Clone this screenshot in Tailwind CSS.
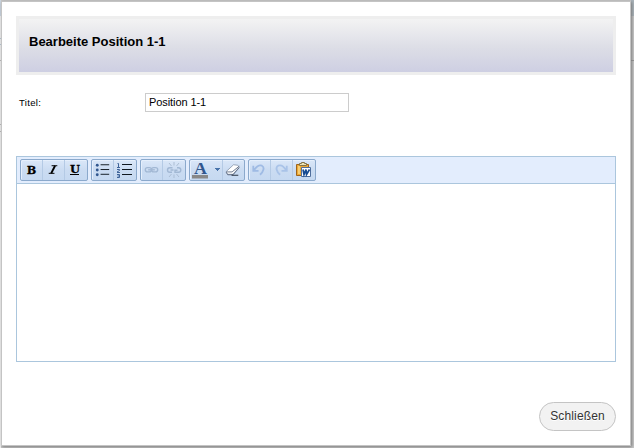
<!DOCTYPE html>
<html lang="de">
<head>
<meta charset="utf-8">
<title>Bearbeite Position 1-1</title>
<script src="https://cdn.jsdelivr.net/npm/@tailwindcss/browser@4"></script>
</head>
<body class="h-[448px] w-[634px] overflow-hidden bg-[#d0d0d0] font-['Liberation_Sans',Arial,sans-serif] text-black">
<div class="relative h-[448px] w-[634px] overflow-hidden bg-[#c9c9c9]">
  <!-- page behind the dialog -->
  <div class="absolute left-0 top-0 h-[448px] w-[1px] bg-[#f3f3f3]"></div>
  <div class="absolute left-0 top-0 h-4 w-[1px] bg-[#ccd7e2]"></div>
  <div class="absolute left-0 top-[38px] h-[7px] w-[1px] border-y border-[#b8c8d6]"></div>
  <div class="absolute left-0 top-[60px] h-px w-px bg-[#bbb]"></div>
  <div class="absolute left-0 top-[124px] h-[8px] w-[1px] border-y border-[#bbb]"></div>
  <div class="absolute right-0 top-0 h-4 w-[3px] bg-[#a9b3ba]"></div>
  <div class="absolute right-0 top-[60px] h-px w-[3px] bg-[#969696]"></div>

  <main class="absolute left-px top-px flex h-[445px] w-[630px] flex-col border border-[#c4c4c4] bg-white px-[14px] pt-[14px] shadow-[1px_1px_3px_#777]">
    <header class="flex h-[59px] w-[600px] shrink-0 items-center border-[3px] border-[#eeeeee] bg-linear-to-b from-[#f3f3f3] from-5% via-[#dcdde6] via-55% to-[#cccde2] bg-origin-border pl-[10px] pb-[8px]">
      <h1 class="text-[13px] font-bold leading-[15px]">Bearbeite Position 1-1</h1>
    </header>
    <div class="mt-[18px] flex h-[19px] shrink-0 items-center pl-[3px]">
      <label for="titel" class="w-[126px] text-[9.6px] leading-[12px] tracking-[0.3px]">Titel:</label>
      <input id="titel" value="Position 1-1" class="h-[19px] w-[204px] border border-[#cccccc] bg-white px-[3px] pb-px text-[11px] leading-[15px] tracking-[-0.08px] outline-none">
    </div>

    <section class="mt-[44px] flex h-[206px] w-[600px] shrink-0 flex-col border border-[#abc6dd]">
      <div class="flex h-[27px] shrink-0 gap-[3px] border-b border-[#abc6dd] bg-[#e3edfd] pl-[3px] pt-[2px]">
        <div class="flex h-[22px] w-[68px] divide-x divide-[#b4cae5] rounded-[2px] border border-[#8ba9cc] bg-linear-to-b from-[#dae7f8] via-[#cbdcf2] to-[#c6d9f1] shadow-[inset_1px_1px_0_#e5effc]">
          <svg width="22" height="20" viewBox="0 0 22 20"><text x="6" y="14" font-family="DejaVu Serif" font-size="12.5" font-weight="bold" textLength="10" lengthAdjust="spacingAndGlyphs" stroke="#000" stroke-width=".3">B</text></svg>
          <svg width="22" height="20" viewBox="0 0 22 20"><path d="M9 5.500h6M6 13.500h6" stroke="#000" fill="none"/><path d="M12.600 5.500l-4 8" stroke="#000" stroke-width="2"/></svg>
          <svg width="22" height="20" viewBox="0 0 22 20"><text x="5" y="13" font-family="DejaVu Serif" font-size="11" font-weight="bold" textLength="10" lengthAdjust="spacingAndGlyphs" stroke="#000" stroke-width=".3">U</text><path d="M5 14.500h9" stroke="#000"/></svg>
        </div>
        <div class="flex h-[22px] w-[46px] divide-x divide-[#b4cae5] rounded-[2px] border border-[#8ba9cc] bg-linear-to-b from-[#dae7f8] via-[#cbdcf2] to-[#c6d9f1] shadow-[inset_1px_1px_0_#e5effc]">
          <svg width="22" height="20" viewBox="0 0 22 20"><g fill="#31578f"><circle cx="5.500" cy="5" r="1.500"/><circle cx="5.500" cy="10" r="1.500"/><circle cx="5.500" cy="15" r="1.500"/></g><path d="M9 4.500h9M9 9.500h9M9 14.500h9" stroke="#101820"/></svg>
          <svg width="22" height="20" viewBox="0 0 22 20"><g fill="none" stroke="#3e6399"><path d="M3.500 3.500h1V7M3 7.500h3M3 9.500h2.500v1L3 12M3 12.500h3M3 14.500h2.500v3H3M3.500 16h2"/></g><path d="M8 4.500h10M8 9.500h10M8 14.500h10" stroke="#101820"/></svg>
        </div>
        <div class="flex h-[22px] w-[46px] divide-x divide-[#b4cae5] rounded-[2px] border border-[#8ba9cc] bg-linear-to-b from-[#dae7f8] via-[#cbdcf2] to-[#c6d9f1] shadow-[inset_1px_1px_0_#e5effc]">
          <svg width="22" height="20" viewBox="0 0 22 20"><g fill="none" stroke="#a2b8d4" stroke-width="1.400"><rect x="4.500" y="7.500" width="6.500" height="4.500" rx="2.250"/><rect x="11" y="7.500" width="6.500" height="4.500" rx="2.250"/><path d="M7.500 9.800h7"/></g></svg>
          <svg width="22" height="20" viewBox="0 0 22 20"><g fill="none" stroke="#a2b8d4" stroke-width="1.400"><path d="M9.500 7.700H6.800a2.200 2.200 0 0 0 0 4.600H9M7.500 10h3M14 7.700h1.500a2.200 2.200 0 0 1 0 4.600H12v-2h2.500"/></g><path d="M11 2v3.500M6 3l2.500 3M16 3l-2.500 3M11 14.500V18M6 17l2.500-3M16 17l-2.500-3" stroke="#a8bad0" stroke-width=".9"/></svg>
        </div>
        <div class="flex h-[22px] w-[56px] rounded-[2px] border border-[#8ba9cc] bg-linear-to-b from-[#dae7f8] via-[#cbdcf2] to-[#c6d9f1] shadow-[inset_1px_1px_0_#e5effc]">
          <svg width="22" height="20" viewBox="0 0 22 20"><path d="M2 15h16v3.500H2z" fill="#888"/><text x="4" y="13.500" font-family="Liberation Serif" font-size="16" font-weight="bold" fill="#31578f" textLength="13" lengthAdjust="spacingAndGlyphs">A</text></svg>
          <svg width="10" height="20" viewBox="0 0 10 20"><path d="M3 8h5v1H7v1H6v1H5v-1H4V9H3z" fill="#4873aa"/></svg>
          <svg class="border-l border-[#b4cae5]" width="22" height="20" viewBox="0 0 22 20"><path d="M3.500 11.500L11 4.500l4.500.5 1.500 2-6.500 7.500H5L3.500 13z" fill="#fff" stroke="#8290a5" stroke-width=".8"/><path d="M3.500 12h6L17 6M3.500 12.500L5 15h5.500L17 7.500" fill="none" stroke="#56647c" stroke-width=".9"/><path d="M9 15.500h7" stroke="#222c3a"/></svg>
        </div>
        <div class="flex h-[22px] w-[68px] divide-x divide-[#b4cae5] rounded-[2px] border border-[#8ba9cc] bg-linear-to-b from-[#dae7f8] via-[#cbdcf2] to-[#c6d9f1] shadow-[inset_1px_1px_0_#e5effc]">
          <svg width="22" height="20" viewBox="0 0 22 20"><path d="M4.500 5.500v5.500h5.500M5 10.500C8 6 11 4.500 13.500 5.500c3 1.500 2 6-2 9.500" fill="none" stroke="#9fbbe4" stroke-width="1.900"/></svg>
          <svg width="22" height="20" viewBox="0 0 22 20"><path d="M16.500 5.500v5.500H11M16 10.500C13.500 6 10 4.500 7.500 5.500c-3 1.500-2 6 2 9.500" fill="none" stroke="#a9c3e8" stroke-width="1.900"/></svg>
          <svg width="22" height="20" viewBox="0 0 22 20"><path d="M3.500 4.500h12v11h-12z" fill="#eba937" stroke="#9e641b"/><path d="M5 6h2v8H5z" fill="#f8ce74"/><path d="M6.500 5.500v-2h2v-1h3v1h2v2z" fill="#ece4b7" stroke="#867447"/><path d="M8.500 7.500h9v9h-9z" fill="#fff" stroke="#4f6e9c"/><path d="M10 9.500l1 5 2-5 .5 5 3-5" fill="none" stroke="#174b91" stroke-width="1.700"/></svg>
        </div>
      </div>
      <div class="flex-1 bg-white" contenteditable="true"></div>
    </section>

    <footer class="mt-[40px] flex w-[600px] justify-end">
      <button class="h-[29px] w-[77px] rounded-full border border-[#c4c4c4] bg-[#f2f2f2] text-[12px] leading-[27px] tracking-[0.15px] text-[#333] [text-shadow:0_1px_0_#fff]">Schließen</button>
    </footer>
  </main>
</div>
</body>
</html>
